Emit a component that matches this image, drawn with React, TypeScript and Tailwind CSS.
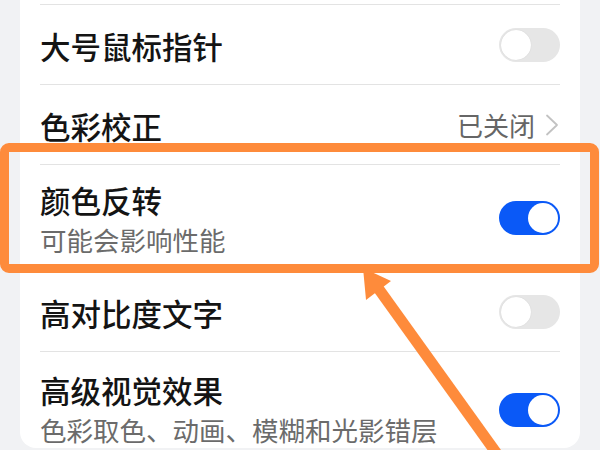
import React from "react"

const font = { fontFamily: '"Noto Sans CJK SC", "Noto Sans", sans-serif' }

function Toggle({ on }: { on: boolean }) {
  return (
    <div
      className={
        on
          ? "relative w-[61px] h-[34px] rounded-full bg-[#0a59f7] shrink-0"
          : "relative w-[61px] h-[34px] rounded-full bg-[#e6e6e6] shrink-0"
      }
    >
      <div
        className={
          on
            ? "absolute top-[2px] right-[2px] w-[30px] h-[30px] rounded-full bg-white"
            : "absolute top-[2px] left-[2px] w-[30px] h-[30px] rounded-full bg-white shadow-[0_0_1px_rgba(0,0,0,0.15)]"
        }
      />
    </div>
  )
}

function Chevron() {
  return (
    <svg width="16" height="22" viewBox="0 0 16 22" className="ml-[9px]">
      <polyline points="3,1.5 13,11 3,20.5" fill="none" stroke="#c2c2c2" strokeWidth="1.8" strokeLinecap="round" strokeLinejoin="round" />
    </svg>
  )
}

function Row({ title, sub, right, h, divider = true, top }: {
  title: string
  sub?: string
  right: React.ReactNode
  h: string
  divider?: boolean
  top?: string
}) {
  return (
    <div className={`mx-[20px] ${divider ? "border-t border-[#e3e3e3]" : ""} ${h} flex ${sub ? "items-start" : "items-center"} justify-between`}>
      {sub ? (
        <>
          <div className={`flex flex-col ${top}`}>
            <span className="text-[30.5px] leading-[41px] font-medium text-[#141414]">{title}</span>
            <span className="text-[26.5px] leading-[37px] text-[#6b6b6b]">{sub}</span>
          </div>
          <div className="self-center">{right}</div>
        </>
      ) : (
        <>
          <span className="text-[30.5px] leading-[41px] font-medium text-[#141414] pt-[4px]">{title}</span>
          {right}
        </>
      )}
    </div>
  )
}

export default function App() {
  return (
    <div className="relative w-[600px] h-[450px] overflow-hidden bg-[#f1f2f4]" style={font}>
      <div className="mx-[20px] h-[448px] bg-white rounded-b-[16px] overflow-hidden">
        <div className="h-[4px]" />
        <Row title="大号鼠标指针" right={<Toggle on={false} />} h="h-[80px]" />
        <Row
          title="色彩校正"
          right={
            <div className="flex items-center">
              <span className="text-[26px] leading-[37px] text-[#666666]">已关闭</span>
              <Chevron />
            </div>
          }
          h="h-[80px]"
        />
        <Row title="颜色反转" sub="可能会影响性能" right={<Toggle on={true} />} h="h-[107px]" top="pt-[15px]" />
        <Row title="高对比度文字" right={<Toggle on={false} />} h="h-[80px]" />
        <Row title="高级视觉效果" sub="色彩取色、动画、模糊和光影错层" right={<div className="mt-[10px]"><Toggle on={true} /></div>} h="h-[106px]" top="pt-[18px]" />
      </div>

      {/* annotation overlay */}
      <div className="absolute left-0 top-[143px] w-[599px] h-[130px] border-[9px] border-[#fe8b3b] rounded-[9px]" />
      <svg className="absolute left-0 top-0" width="600" height="450" viewBox="0 0 600 450">
        <line x1="378" y1="288" x2="505" y2="465" stroke="#fe8b3b" strokeWidth="11" />
        <polygon points="363,268 391,281 366,300" fill="#fe8b3b" />
      </svg>
    </div>
  )
}
